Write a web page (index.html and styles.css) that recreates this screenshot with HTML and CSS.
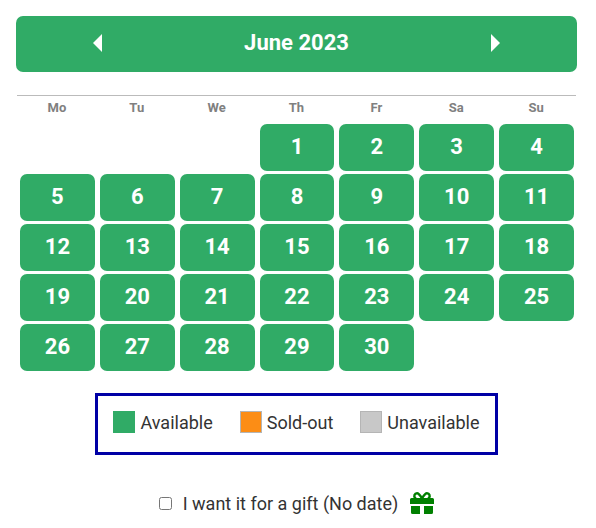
FILE: index.html
```html
<!DOCTYPE html>
<html lang="en">
<head>
    <meta charset="UTF-8">
    <meta name="viewport" content="width=device-width, initial-scale=1.0">
    <title>Choose a date</title>
    <link rel="stylesheet" href="styles.css">
</head>
<body>
    <div class="calendar-header">
        <button type="button" class="nav-btn" aria-label="Previous month">
            <svg width="9" height="18" viewBox="0 0 9 18"><path d="M9 0v18L0 9z" fill="#fff"/></svg>
        </button>
        <h2>June 2023</h2>
        <button type="button" class="nav-btn" aria-label="Next month">
            <svg width="9" height="18" viewBox="0 0 9 18"><path d="M0 0v18l9-9z" fill="#fff"/></svg>
        </button>
    </div>

    <table class="calendar">
        <thead>
            <tr><th>Mo</th><th>Tu</th><th>We</th><th>Th</th><th>Fr</th><th>Sa</th><th>Su</th></tr>
        </thead>
        <tbody>
            <tr>
                <td></td>
                <td></td>
                <td></td>
                <td><button type="button" class="day">1</button></td>
                <td><button type="button" class="day">2</button></td>
                <td><button type="button" class="day">3</button></td>
                <td><button type="button" class="day">4</button></td>
            </tr>
            <tr>
                <td><button type="button" class="day">5</button></td>
                <td><button type="button" class="day">6</button></td>
                <td><button type="button" class="day">7</button></td>
                <td><button type="button" class="day">8</button></td>
                <td><button type="button" class="day">9</button></td>
                <td><button type="button" class="day">10</button></td>
                <td><button type="button" class="day">11</button></td>
            </tr>
            <tr>
                <td><button type="button" class="day">12</button></td>
                <td><button type="button" class="day">13</button></td>
                <td><button type="button" class="day">14</button></td>
                <td><button type="button" class="day">15</button></td>
                <td><button type="button" class="day">16</button></td>
                <td><button type="button" class="day">17</button></td>
                <td><button type="button" class="day">18</button></td>
            </tr>
            <tr>
                <td><button type="button" class="day">19</button></td>
                <td><button type="button" class="day">20</button></td>
                <td><button type="button" class="day">21</button></td>
                <td><button type="button" class="day">22</button></td>
                <td><button type="button" class="day">23</button></td>
                <td><button type="button" class="day">24</button></td>
                <td><button type="button" class="day">25</button></td>
            </tr>
            <tr>
                <td><button type="button" class="day">26</button></td>
                <td><button type="button" class="day">27</button></td>
                <td><button type="button" class="day">28</button></td>
                <td><button type="button" class="day">29</button></td>
                <td><button type="button" class="day">30</button></td>
                <td></td>
                <td></td>
            </tr>
        </tbody>
    </table>

    <div class="legend">
        <div class="legend-item"><span class="swatch available"></span>Available</div>
        <div class="legend-item"><span class="swatch sold-out"></span>Sold-out</div>
        <div class="legend-item"><span class="swatch unavailable"></span>Unavailable</div>
    </div>

    <div class="gift">
        <input type="checkbox" id="gift">
        <label for="gift">I want it for a gift (No date)</label>
        <svg class="gift-icon" width="24" height="22" viewBox="0 0 24 22">
            <path d="M1.500 6h21A1.500 1.500 0 0 1 24 7.500V12H0V7.500A1.500 1.500 0 0 1 1.500 6z" fill="#008000"/>
            <path d="M1 14h9v8H2.500A1.500 1.500 0 0 1 1 20.500zM14 14h9v6.500a1.500 1.500 0 0 1-1.500 1.500H14z" fill="#008000"/>
            <path d="M12 6.500C10 3 8.700 1.300 7 1.300a2.700 2.700 0 0 0-1.800 4.700l1 1M12 6.500c2-3.500 3.300-5.200 5-5.200a2.700 2.700 0 0 1 1.800 4.700l-1 1" fill="none" stroke="#008000" stroke-width="2.400"/>
        </svg>
    </div>
</body>
</html>
```
FILE: styles.css
```css
/* General Styles */
* {
    box-sizing: border-box;
}
body {
    font-family: Roboto, Arial, sans-serif;
    background-color: #fff;
    color: #333;
    margin: 0;
    padding: 16px 19px 8px 16px;
}
button {
    font-family: inherit;
    border: none;
    cursor: pointer;
}
/* Month header */
.calendar-header {
    display: flex;
    justify-content: space-between;
    align-items: center;
    height: 56px;
    padding: 0 69px 2px;
    background-color: #30ab66;
    border-radius: 7px;
}
.calendar-header h2 {
    margin: 0;
    padding-bottom: 2px;
    font-size: 22px;
    font-weight: 700;
    color: #fff;
}
.nav-btn {
    display: flex;
    padding: 0 8px;
    background: none;
}
/* Calendar */
.calendar {
    width: calc(100% - 2px);
    margin: 23px 1px 0;
    table-layout: fixed;
    border-collapse: separate;
    border-spacing: 0;
}
.calendar th {
    height: 28px;
    padding: 0 0 4px;
    border-top: 1px solid #bbb;
    font-size: 13px;
    line-height: 15px;
    color: #808080;
}
.calendar td {
    height: 50px;
    padding: 1px 2px 2px 3px;
}
.day {
    display: block;
    width: 100%;
    height: 47px;
    padding: 0 0 2px;
    border-radius: 7px;
    background-color: #30ab66;
    color: #fff;
    font-size: 22px;
    font-weight: 700;
}
/* Legend */
.legend {
    display: flex;
    gap: 27px;
    width: fit-content;
    margin: 20px auto 0;
    padding: 15px 15px 17px;
    border: 3px solid #0000a5;
    font-size: 18px;
    line-height: 24px;
}
.legend-item {
    display: flex;
    align-items: flex-end;
    gap: 5px;
}
.swatch {
    align-self: flex-start;
    width: 22px;
    height: 22px;
    border: 1px solid #b5b5b5;
}
.available {
    background-color: #30ab66;
    border-color: #30ab66;
}
.sold-out {
    background-color: #fc8d15;
}
.unavailable {
    background-color: #c8c8c8;
}
/* Gift option */
.gift {
    display: flex;
    justify-content: center;
    align-items: center;
    margin-top: 37px;
    font-size: 18px;
    line-height: 24px;
}
.gift input {
    width: 13px;
    height: 13px;
    margin: 0 11px 2px 0;
}
.gift-icon {
    margin: 0 0 2px 12px;
}
```
